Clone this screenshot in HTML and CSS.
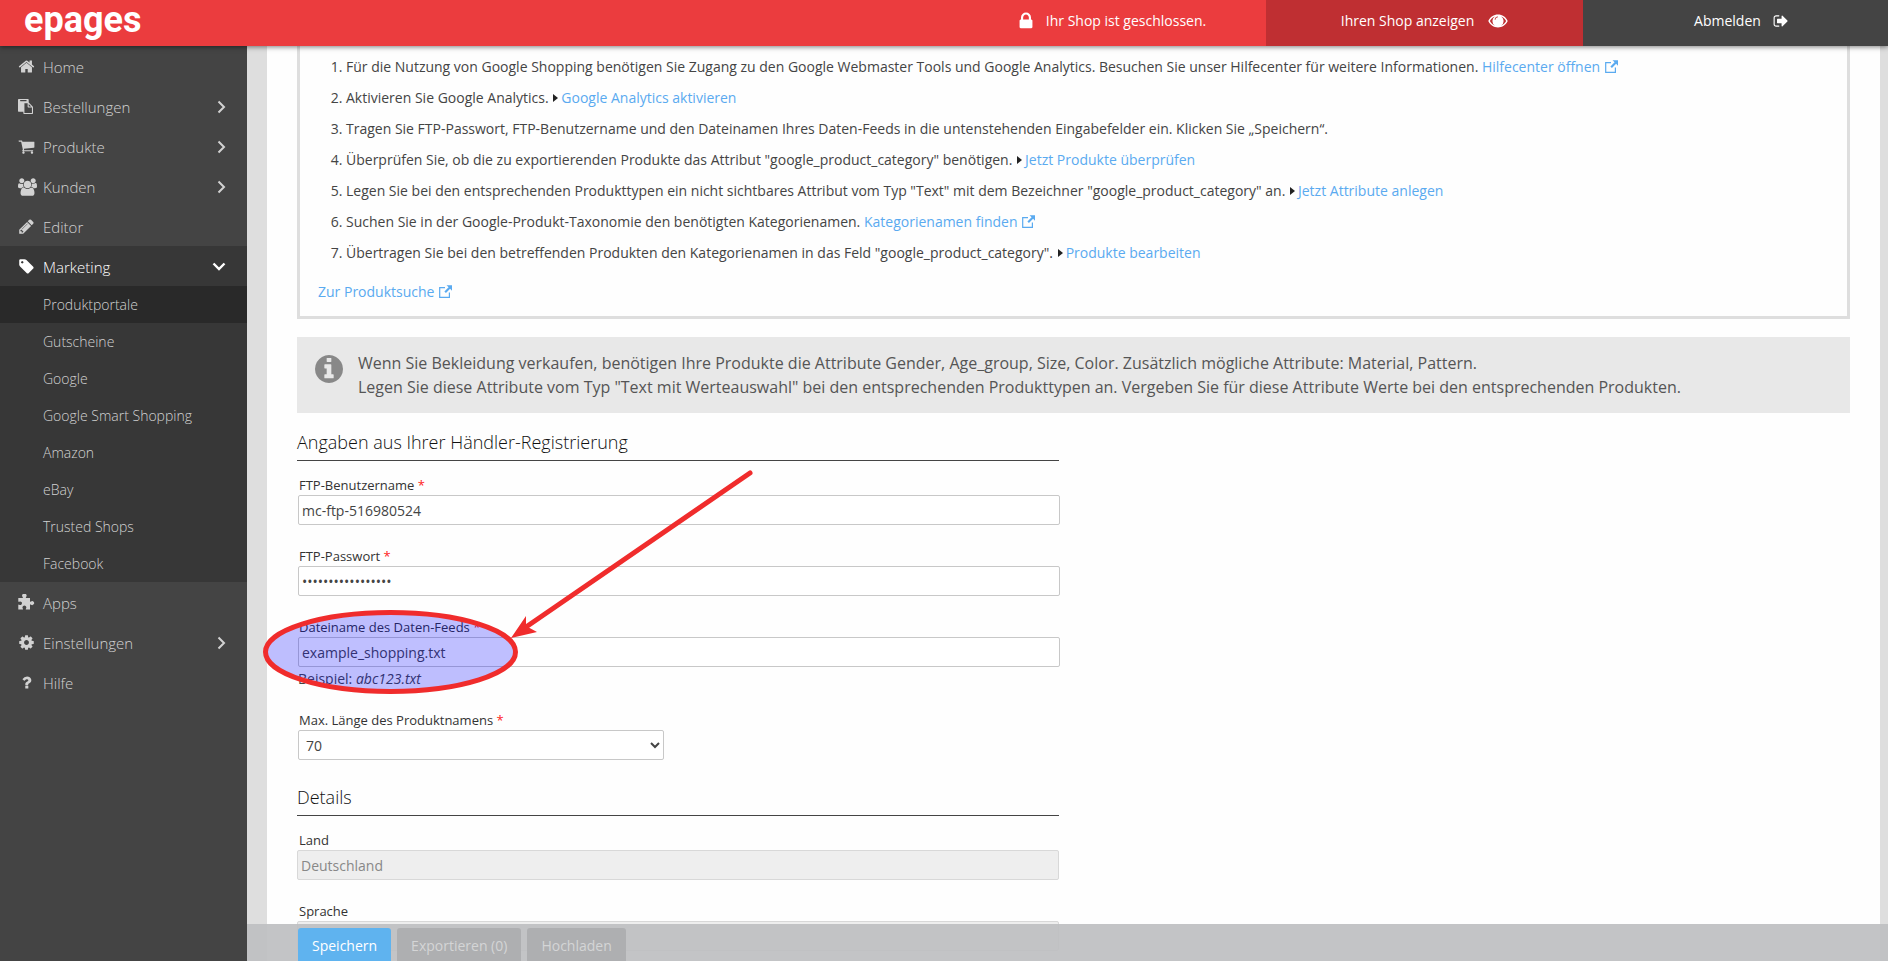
FILE: index.html
```html
<!DOCTYPE html>
<html lang="de">
<head>
<meta charset="utf-8">
<title>Produktportale – Google Shopping</title>
<link rel="stylesheet" href="styles.css">
</head>
<body>
<svg class="sprite" aria-hidden="true">
  <symbol id="home" viewBox="0 0 1792 1792"><path d="M1472 992v480q0 26-19 45t-45 19h-384v-384h-256v384h-384q-26 0-45-19t-19-45v-480q0-1 .5-3t.5-3l575-474 575 474q1 2 1 6zm223-69l-62 74q-8 9-21 11h-3q-13 0-21-7l-692-577-692 577q-12 8-24 7-13-2-21-11l-62-74q-8-10-7-23.5t11-21.5l719-599q32-26 76-26t76 26l244 204v-195q0-14 9-23t23-9h192q14 0 23 9t9 23v408l219 182q10 8 11 21.5t-7 23.5z"/></symbol>
  <symbol id="paste" viewBox="0 0 1792 1792"><path d="M768 1664h896v-640h-416q-40 0-68-28t-28-68v-416h-384v1152zm256-1440v-64q0-13-9.5-22.5t-22.5-9.5h-704q-13 0-22.5 9.5t-9.5 22.5v64q0 13 9.5 22.5t22.5 9.5h704q13 0 22.5-9.5t9.5-22.5zm256 672h299l-299-299v299zm512 128v672q0 40-28 68t-68 28h-960q-40 0-68-28t-28-68v-160h-544q-40 0-68-28t-28-68v-1344q0-40 28-68t68-28h1088q40 0 68 28t28 68v328q21 13 36 28l408 408q28 28 48 76t20 88z"/></symbol>
  <symbol id="cart" viewBox="0 0 1792 1792"><path d="M704 1536q0 52-38 90t-90 38-90-38-38-90 38-90 90-38 90 38 38 90zm896 0q0 52-38 90t-90 38-90-38-38-90 38-90 90-38 90 38 38 90zm128-1088v512q0 24-16.5 42.5t-40.5 21.5l-1044 122q13 60 13 70 0 16-24 64h920q26 0 45 19t19 45-19 45-45 19h-1024q-26 0-45-19t-19-45q0-11 8-31.5t16-36 21.5-40 15.5-29.5l-177-823h-204q-26 0-45-19t-19-45 19-45 45-19h256q16 0 28.5 6.5t19.5 15.5 13 24.5 8 26 5.5 29.5 4.5 26h1201q26 0 45 19t19 45z"/></symbol>
  <symbol id="group" viewBox="0 0 1920 1792"><path d="M593 896q-162 5-265 128h-134q-82 0-138-40.5t-56-118.5q0-353 124-353 6 0 43.5 21t97.5 42.5 119 21.5q67 0 133-23-5 37-5 66 0 159 81 287zm1071 637q0 120-73 189.5t-194 69.5h-874q-121 0-194-69.5t-73-189.5q0-53 3.5-103.5t14-109 26.5-108.5 43-97.5 62-81 85.5-53.5 111.5-20q10 0 43 21.5t73 48 107 48 135 21.5 135-21.5 107-48 73-48 43-21.5q61 0 111.5 20t85.5 53.5 62 81 43 97.5 26.5 108.5 14 109 3.5 103.5zm-1024-1277q0 106-75 181t-181 75-181-75-75-181 75-181 181-75 181 75 75 181zm704 384q0 159-112.5 271.5t-271.5 112.5-271.5-112.5-112.5-271.5 112.5-271.5 271.5-112.5 271.5 112.5 112.5 271.5zm576 225q0 78-56 118.5t-138 40.5h-134q-103-123-265-128 81-128 81-287 0-29-5-66 66 23 133 23 59 0 119-21.5t97.5-42.5 43.5-21q124 0 124 353zm-128-609q0 106-75 181t-181 75-181-75-75-181 75-181 181-75 181 75 75 181z"/></symbol>
  <symbol id="pencil" viewBox="0 0 1792 1792"><path d="M491 1536l91-91-235-235-91 91v107h128v128h107zm523-928q0-22-22-22-10 0-17 7l-542 542q-7 7-7 17 0 22 22 22 10 0 17-7l542-542q7-7 7-17zm-54-192l416 416-832 832h-416v-416zm683 96q0 53-37 90l-166 166-416-416 166-165q36-38 90-38 53 0 91 38l235 234q37 39 37 91z"/></symbol>
  <symbol id="tag" viewBox="0 0 1792 1792"><path d="M576 448q0-53-37.5-90.5t-90.5-37.5-90.5 37.5-37.5 90.5 37.5 90.5 90.5 37.5 90.5-37.5 37.5-90.5zm1067 576q0 53-37 90l-491 492q-39 37-91 37-53 0-90-37l-715-716q-38-37-64.5-101t-26.5-117v-416q0-52 38-90t90-38h416q53 0 117 26.5t102 64.5l715 714q37 39 37 91z"/></symbol>
  <symbol id="puzzle" viewBox="0 0 17 17"><path d="M.3 4H4.500Q5.300 4 4.600 3A2.200 2.200 0 1 1 8.100 3Q7.500 4 8.200 4H12V7.400Q12 8.100 13 7.400A2 2 0 1 1 13 10.700Q12 10 12 10.800V15.500H8.200Q7.400 15.500 8 14.500A1.900 1.900 0 1 0 4.800 14.500Q5.300 15.500 4.600 15.500H.3V11Q.3 10.300 1.200 10.800A1.800 1.800 0 1 0 1.200 7.700Q.3 8.100 .3 7.400z"/></symbol>
  <symbol id="cog" viewBox="0 0 1792 1792"><path d="M1152 896q0-106-75-181t-181-75-181 75-75 181 75 181 181 75 181-75 75-181zm512-109v222q0 12-8 23t-20 13l-185 28q-19 54-39 91 35 50 107 138 10 12 10 25t-9 23q-27 37-99 108t-94 71q-12 0-26-9l-138-108q-44 23-91 38-16 136-29 186-7 28-36 28h-222q-14 0-24.5-8.5t-11.5-21.5l-28-184q-49-16-90-37l-141 107q-10 9-25 9-14 0-25-11-126-114-165-168-7-10-7-23 0-12 8-23 15-21 51-66.5t54-70.5q-27-50-41-99l-183-27q-13-2-21-12.5t-8-23.5v-222q0-12 8-23t19-13l186-28q14-46 39-92-40-57-107-138-10-12-10-24 0-10 9-23 26-36 98.500-107.5t94.500-71.5q13 0 26 10l138 107q44-23 91-38 16-136 29-186 7-28 36-28h222q14 0 24.500 8.500t11.500 21.500l28 184q49 16 90 37l142-107q9-9 24-9 13 0 25 10 129 119 165 170 7 8 7 22 0 12-8 23-15 21-51 66.500t-54 70.500q26 50 41 98l183 28q13 2 21 12.500t8 23.500z"/></symbol>
  <symbol id="question" viewBox="0 0 1792 1792"><path d="M1088 1256v240q0 16-12 28t-28 12h-240q-16 0-28-12t-12-28v-240q0-16 12-28t28-12h240q16 0 28 12t12 28zm316-600q0 54-15.5 101t-35 76.5-55 59.5-57.5 43.5-61 35.5q-41 23-68.5 65t-27.5 67q0 17-12 32.5t-28 15.5h-240q-15 0-25.5-18.5t-10.5-37.5v-45q0-83 65-156.5t143-108.500q59-27 84-56t25-76q0-42-46.500-74t-107.500-32q-65 0-108 29-35 25-107 115-13 16-31 16-12 0-25-8l-164-125q-13-10-15.500-25t5.500-28q160-266 464-266 80 0 161 31t146 83 106 127.500 41 158.500z"/></symbol>
  <symbol id="lock" viewBox="0 0 1792 1792"><path d="M640 768h512v-192q0-106-75-181t-181-75-181 75-75 181v192zm832 96v576q0 40-28 68t-68 28h-960q-40 0-68-28t-28-68v-576q0-40 28-68t68-28h32v-192q0-184 132-316t316-132 316 132 132 316v192h32q40 0 68 28t28 68z"/></symbol>
  <symbol id="eye" viewBox="0 0 20 14"><path d="M10 .6C14.200 .6 17.800 3 19.700 7C17.800 11 14.200 13.400 10 13.400S2.200 11 .3 7C2.200 3 5.800 .6 10 .6zM1.900 7C3 9.200 4.700 10.800 6.800 11.600A5.600 5.600 0 0 1 6.800 2.400C4.700 3.200 3 4.800 1.900 7zM18.100 7C17 4.800 15.300 3.200 13.200 2.400A5.600 5.600 0 0 1 13.200 11.600C15.300 10.800 17 9.200 18.100 7zM10 2.400C7.900 2.400 6.700 4 6.700 5.800H7.500C7.500 4.200 8.500 3.200 10 3.200z" fill-rule="evenodd"/></symbol>
  <symbol id="signout" viewBox="0 0 1792 1792"><path d="M704 1440q0 4 1 20t.5 26.5-3 23.5-10 19.5-20.5 6.5h-320q-119 0-203.5-84.5t-84.5-203.5v-704q0-119 84.5-203.5t203.500-84.5h320q13 0 22.500 9.500t9.500 22.500q0 4 1 20t.5 26.500-3 23.500-10 19.500-20.500 6.500h-320q-66 0-113 47t-47 113v704q0 66 47 113t113 47h312l11.500 1 11.500 3 8 5.500 7 9 2 13.500zm928-544q0 26-19 45l-544 544q-19 19-45 19t-45-19-19-45v-288h-448q-26 0-45-19t-19-45v-384q0-26 19-45t45-19h448v-288q0-26 19-45t45-19 45 19l544 544q19 19 19 45z"/></symbol>
  <symbol id="info" viewBox="128 128 1536 1536"><path d="M1152 1376v-160q0-14-9-23t-23-9h-96v-512q0-14-9-23t-23-9h-320q-14 0-23 9t-9 23v160q0 14 9 23t23 9h96v320h-96q-14 0-23 9t-9 23v160q0 14 9 23t23 9h448q14 0 23-9t9-23zm-128-896v-160q0-14-9-23t-23-9h-192q-14 0-23 9t-9 23v160q0 14 9 23t23 9h192q14 0 23-9t9-23zm640 416q0 209-103 385.500t-279.500 279.500-385.500 103-385.500-103-279.500-279.500-103-385.500 103-385.500 279.500-279.500 385.500-103 385.500 103 279.500 279.500 103 385.500z"/></symbol>
  <symbol id="external" viewBox="0 0 13 13"><path d="M6 2.600H.7v9.700h9.700V7.600" fill="none" stroke="currentColor" stroke-width="1.200"/><path d="M7.500.2H13v5.500l-1.900-1.900-4.200 4.200-1.500-1.500 4.200-4.200z"/></symbol>
  <symbol id="caret" viewBox="0 0 5 8"><path d="M0 0l5 4-5 4z"/></symbol>
  <symbol id="right" viewBox="0 0 9 14"><path d="M1.500 1.500L7 7l-5.500 5.500" fill="none" stroke="currentColor" stroke-width="2"/></symbol>
  <symbol id="down" viewBox="0 0 14 9"><path d="M1.500 1.500L7 7l5.500-5.500" fill="none" stroke="currentColor" stroke-width="2.400"/></symbol>
</svg>

<header class="topbar">
  <a class="logo" href="#">epages</a>
  <div class="top-item top-status"><svg class="icon-lock"><use href="#lock"/></svg><span>Ihr Shop ist geschlossen.</span></div>
  <a class="top-item top-view" href="#"><span>Ihren Shop anzeigen</span><svg class="icon-eye"><use href="#eye"/></svg></a>
  <a class="top-item top-logout" href="#"><span>Abmelden</span><svg class="icon-out"><use href="#signout"/></svg></a>
</header>

<div class="layout">
  <nav class="sidebar">
    <a class="nav-item" href="#"><svg class="nav-icon"><use href="#home"/></svg>Home</a>
    <a class="nav-item" href="#"><svg class="nav-icon nav-icon-small"><use href="#paste"/></svg>Bestellungen<svg class="chevron"><use href="#right"/></svg></a>
    <a class="nav-item" href="#"><svg class="nav-icon"><use href="#cart"/></svg>Produkte<svg class="chevron"><use href="#right"/></svg></a>
    <a class="nav-item" href="#"><svg class="nav-icon nav-icon-wide"><use href="#group"/></svg>Kunden<svg class="chevron"><use href="#right"/></svg></a>
    <a class="nav-item" href="#"><svg class="nav-icon"><use href="#pencil"/></svg>Editor</a>
    <a class="nav-item nav-open" href="#"><svg class="nav-icon"><use href="#tag"/></svg>Marketing<svg class="chevron chevron-down"><use href="#down"/></svg></a>
    <div class="subnav">
      <a class="sub-item sub-active" href="#">Produktportale</a>
      <a class="sub-item" href="#">Gutscheine</a>
      <a class="sub-item" href="#">Google</a>
      <a class="sub-item" href="#">Google Smart Shopping</a>
      <a class="sub-item" href="#">Amazon</a>
      <a class="sub-item" href="#">eBay</a>
      <a class="sub-item" href="#">Trusted Shops</a>
      <a class="sub-item" href="#">Facebook</a>
    </div>
    <a class="nav-item" href="#"><svg class="nav-icon"><use href="#puzzle"/></svg>Apps</a>
    <a class="nav-item" href="#"><svg class="nav-icon"><use href="#cog"/></svg>Einstellungen<svg class="chevron"><use href="#right"/></svg></a>
    <a class="nav-item" href="#"><svg class="nav-icon"><use href="#question"/></svg>Hilfe</a>
  </nav>

  <div class="workspace">
    <main class="page">
      <section class="steps">
        <ol class="step-list">
          <li>Für die Nutzung von Google Shopping benötigen Sie Zugang zu den Google Webmaster Tools und Google Analytics. Besuchen Sie unser Hilfecenter für weitere Informationen. <a href="#">Hilfecenter öffnen <svg class="icon-ext"><use href="#external"/></svg></a></li>
          <li>Aktivieren Sie Google Analytics. <svg class="icon-caret"><use href="#caret"/></svg><a href="#">Google Analytics aktivieren</a></li>
          <li>Tragen Sie FTP-Passwort, FTP-Benutzername und den Dateinamen Ihres Daten-Feeds in die untenstehenden Eingabefelder ein. Klicken Sie „Speichern“.</li>
          <li>Überprüfen Sie, ob die zu exportierenden Produkte das Attribut "google_product_category" benötigen. <svg class="icon-caret"><use href="#caret"/></svg><a href="#">Jetzt Produkte überprüfen</a></li>
          <li>Legen Sie bei den entsprechenden Produkttypen ein nicht sichtbares Attribut vom Typ "Text" mit dem Bezeichner "google_product_category" an. <svg class="icon-caret"><use href="#caret"/></svg><a href="#">Jetzt Attribute anlegen</a></li>
          <li>Suchen Sie in der Google-Produkt-Taxonomie den benötigten Kategorienamen. <a href="#">Kategorienamen finden <svg class="icon-ext"><use href="#external"/></svg></a></li>
          <li>Übertragen Sie bei den betreffenden Produkten den Kategorienamen in das Feld "google_product_category". <svg class="icon-caret"><use href="#caret"/></svg><a href="#">Produkte bearbeiten</a></li>
        </ol>
        <a class="search-link" href="#">Zur Produktsuche <svg class="icon-ext"><use href="#external"/></svg></a>
      </section>

      <section class="notice">
        <svg class="icon-info"><use href="#info"/></svg>
        <p>Wenn Sie Bekleidung verkaufen, benötigen Ihre Produkte die Attribute Gender, Age_group, Size, Color. Zusätzlich mögliche Attribute: Material, Pattern.<br>Legen Sie diese Attribute vom Typ "Text mit Werteauswahl" bei den entsprechenden Produkttypen an. Vergeben Sie für diese Attribute Werte bei den entsprechenden Produkten.</p>
      </section>

      <form class="form">
        <h2>Angaben aus Ihrer Händler-Registrierung</h2>
        <div class="fields">
          <div class="field">
            <label for="user">FTP-Benutzername <b>*</b></label>
            <input id="user" type="text" value="mc-ftp-516980524">
          </div>
          <div class="field">
            <label for="pass">FTP-Passwort <b>*</b></label>
            <input id="pass" type="password" value="12345678901234567">
          </div>
          <div class="field field-marked">
            <label for="file">Dateiname des Daten-Feeds <b>*</b></label>
            <input id="file" type="text" value="example_shopping.txt">
            <p class="hint">Beispiel: <i>abc123.txt</i></p>
            <svg class="annotation" viewBox="260 465 500 235" aria-hidden="true">
              <ellipse cx="390.500" cy="652" rx="125" ry="39.500" fill="#00f" fill-opacity=".25" stroke="#f02c2c" stroke-width="5"/>
              <path d="M750 473L526 627" stroke="#f02c2c" stroke-width="5" stroke-linecap="round"/>
              <path d="M511 638L526 616V626L537 632z" fill="#f02c2c"/>
            </svg>
          </div>
          <div class="field">
            <label for="len">Max. Länge des Produktnamens <b>*</b></label>
            <select id="len"><option>70</option></select>
          </div>
        </div>

        <h2>Details</h2>
        <div class="fields">
          <div class="field field-readonly">
            <label for="land">Land</label>
            <input id="land" type="text" value="Deutschland" disabled>
          </div>
          <div class="field field-readonly">
            <label for="lang">Sprache</label>
            <input id="lang" type="text" value="Deutsch" disabled>
          </div>
        </div>
      </form>
    </main>
    <div class="actions">
      <button class="btn btn-primary" type="button">Speichern</button>
      <button class="btn" type="button" disabled>Exportieren (0)</button>
      <button class="btn" type="button" disabled>Hochladen</button>
    </div>
  </div>
</div>
</body>
</html>
```

FILE: styles.css
```css
* { box-sizing: border-box; }

body {
  margin: 0;
  height: 100vh;
  display: flex;
  flex-direction: column;
  overflow: hidden;
  font: 14px/20px "Open Sans", "Noto Sans", sans-serif;
  color: #444;
  background: #dedede;
}

a { color: #5aaaf0; text-decoration: none; }
svg { fill: currentColor; flex: none; }
.sprite { position: absolute; width: 0; height: 0; }

/* Top bar */
.topbar {
  display: flex;
  flex: none;
  height: 46px;
  position: relative;
  z-index: 3;
  background: #eb3c3e;
  box-shadow: 0 1px 5px rgba(0, 0, 0, .5);
}
.logo {
  flex: 1;
  padding-left: 24px;
  color: #fff;
  font: bold 36px/40px Roboto, sans-serif;
}
.top-item {
  display: flex;
  justify-content: center;
  align-items: center;
  padding-bottom: 4px;
  color: #fff;
}
.top-status { width: 310px; gap: 10px; }
.top-view { width: 317px; gap: 14px; background: #bf2f32; }
.top-logout { width: 305px; gap: 12px; padding-left: 12px; background: #444; }
.icon-lock { width: 20px; height: 20px; }
.icon-eye { width: 20px; height: 14px; }
.icon-out { width: 16px; height: 16px; }

.layout { display: flex; flex: 1; min-height: 0; }

/* Sidebar */
.sidebar { width: 247px; flex: none; background: #444; }
.nav-item {
  display: flex;
  align-items: center;
  height: 40px;
  padding: 1px 21px 0 18px;
  color: #d2d2d2;
  font-size: 15px;
  font-weight: 300;
}
.nav-icon { width: 17px; height: 17px; margin-right: 8px; }
.nav-icon-small { width: 15px; height: 15px; margin-right: 10px; }
.nav-icon-wide { width: 19px; height: 18px; margin-right: 6px; }
.chevron { width: 9px; height: 14px; margin-left: auto; }
.chevron-down { width: 14px; height: 9px; }
.nav-open { background: #373737; color: #fff; }
.subnav { background: #373737; }
.sub-item {
  display: block;
  padding-left: 43px;
  line-height: 37px;
  color: #d2d2d2;
  font-weight: 300;
}
.sub-active { background: #292929; }

/* Content */
.workspace {
  flex: 1;
  min-width: 0;
  position: relative;
  padding: 0 8px 0 20px;
  overflow: hidden;
}
.page { min-height: 100%; padding: 0 30px; background: #fefefe; }
.steps {
  padding: 5px 18px 14px;
  border: solid #dedede;
  border-width: 0 3px 3px;
}
.step-list { margin: 0 0 14px; padding: 0 0 0 28px; line-height: 31px; }
.search-link { display: block; }
.icon-ext { width: 13px; height: 13px; margin-left: 1px; vertical-align: -1px; }
.icon-caret { width: 5px; height: 8px; margin: 0 3px 0 1px; vertical-align: 1px; color: #222; }

.notice {
  display: flex;
  gap: 15px;
  margin-top: 18px;
  padding: 14px 18px;
  background: #e8e8e8;
  color: #555;
  font-size: 16px;
  line-height: 24px;
}
.notice p { margin: 0; }
.icon-info { width: 28px; height: 28px; margin-top: 4px; color: #888; }

/* Form */
.form { max-width: 763px; margin-top: 16px; }
.form h2 {
  margin: 0 1px 15px 0;
  padding-bottom: 5px;
  border-bottom: 1px solid #444;
  color: #111;
  font-size: 18px;
  font-weight: 300;
  line-height: 26px;
}
.fields { display: grid; gap: 22px; margin-bottom: 24px; }
.field { display: grid; margin-left: 1px; }
.field label { padding-left: 1px; color: #333; font-size: 13px; line-height: 19px; }
.field b { color: #f22; font-weight: 400; }
.field input,
.field select {
  width: 100%;
  height: 30px;
  padding: 0 3px;
  border: 1px solid #c8c8c8;
  border-radius: 2px;
  background: #fff;
  color: #444;
  font: inherit;
}
.field select { width: 366px; }
.field-readonly { margin: 0 1px 0 0; }
.field-readonly label { padding-left: 2px; }
.field-readonly input { border-color: #d8d8d8; background: #eee; color: #888; }
.field-marked { position: relative; }
.hint { margin: 2px 0 0; }
.annotation {
  position: absolute;
  left: -38px;
  top: -153px;
  width: 500px;
  height: 235px;
  pointer-events: none;
}

/* Action bar */
.actions {
  position: absolute;
  left: 0;
  right: 0;
  bottom: 0;
  display: flex;
  gap: 6px;
  padding: 4px 51px 0;
  background: rgba(190, 191, 193, .92);
}
.btn {
  height: 33px;
  padding: 2px 14px 0;
  border: 0;
  border-radius: 3px 3px 0 0;
  background: #aeafb1;
  color: #d4d5d6;
  font: 500 14px/20px "Open Sans", sans-serif;
}
.btn-primary { background: #5fb3ef; color: #fff; }
```
